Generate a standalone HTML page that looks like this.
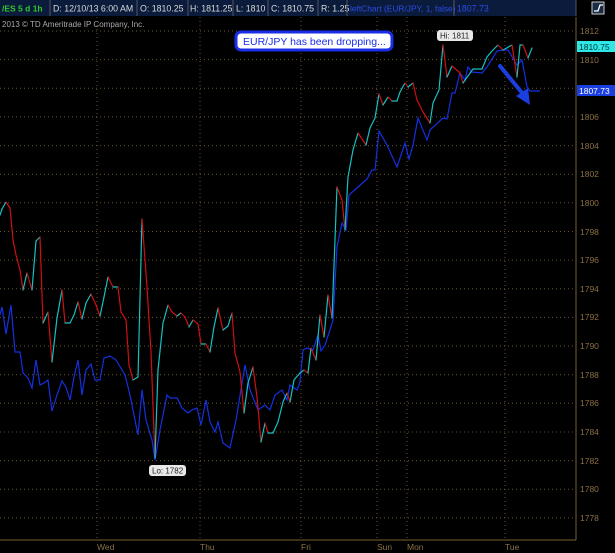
<!DOCTYPE html>
<html><head><meta charset="utf-8"><style>
html,body{margin:0;padding:0;background:#000;width:615px;height:553px;overflow:hidden;font-family:"Liberation Sans",sans-serif}
</style></head><body>
<svg id="s" width="615" height="553" xmlns="http://www.w3.org/2000/svg" style="position:absolute;left:0;top:0;font-family:'Liberation Sans',sans-serif">
<rect width="615" height="553" fill="#000"/>
<rect x="0" y="0" width="576" height="16" fill="#0b1b3b"/>
<g font-size="8.8" fill="#d8d8d8">
<text x="2" y="11.5" fill="#2ec82e" font-weight="bold" font-size="8.5">/ES 5 d 1h</text>
<line x1="50" y1="0" x2="50" y2="16" stroke="#556"/>
<text x="53" y="11.5">D: 12/10/13 6:00 AM</text>
<line x1="137" y1="0" x2="137" y2="16" stroke="#556"/>
<text x="140" y="11.5">O: 1810.25</text>
<line x1="188" y1="0" x2="188" y2="16" stroke="#556"/>
<text x="190" y="11.5">H: 1811.25</text>
<line x1="233" y1="0" x2="233" y2="16" stroke="#556"/>
<text x="236" y="11.5">L: 1810</text>
<line x1="268" y1="0" x2="268" y2="16" stroke="#556"/>
<text x="271" y="11.5">C: 1810.75</text>
<line x1="318" y1="0" x2="318" y2="16" stroke="#556"/>
<text x="321" y="11.5">R: 1.25</text>
<line x1="347" y1="0" x2="347" y2="16" stroke="#556"/>
<text x="350" y="11.5" fill="#2b4ce8" font-size="8.4">leftChart (EUR/JPY, 1, false)</text>
<line x1="454" y1="0" x2="454" y2="16" stroke="#556"/>
<text x="457" y="11.5" fill="#2b4ce8">1807.73</text>
<line x1="576" y1="0" x2="576" y2="16" stroke="#556"/>
</g>
<rect x="592" y="2" width="12" height="12" fill="#1a2a44" stroke="#ccc" stroke-width="1"/>
<path d="M594 11 L598 11 L600 5 L603 5" stroke="#fff" fill="none" stroke-width="1.3"/>
<text x="2" y="27" font-size="8" fill="#aaa">2013 © TD Ameritrade IP Company, Inc.</text>
<g stroke="#6a5530" stroke-dasharray="1,3" stroke-width="1">
<line x1="0" y1="31" x2="576" y2="31"/>
<line x1="0" y1="59.6" x2="576" y2="59.6"/>
<line x1="0" y1="88.3" x2="576" y2="88.3"/>
<line x1="0" y1="116.9" x2="576" y2="116.9"/>
<line x1="0" y1="145.6" x2="576" y2="145.6"/>
<line x1="0" y1="174.2" x2="576" y2="174.2"/>
<line x1="0" y1="202.8" x2="576" y2="202.8"/>
<line x1="0" y1="231.5" x2="576" y2="231.5"/>
<line x1="0" y1="260.1" x2="576" y2="260.1"/>
<line x1="0" y1="288.8" x2="576" y2="288.8"/>
<line x1="0" y1="317.4" x2="576" y2="317.4"/>
<line x1="0" y1="346" x2="576" y2="346"/>
<line x1="0" y1="374.7" x2="576" y2="374.7"/>
<line x1="0" y1="403.3" x2="576" y2="403.3"/>
<line x1="0" y1="432" x2="576" y2="432"/>
<line x1="0" y1="460.6" x2="576" y2="460.6"/>
<line x1="0" y1="489.2" x2="576" y2="489.2"/>
<line x1="0" y1="517.9" x2="576" y2="517.9"/>
<line x1="97" y1="17" x2="97" y2="540"/>
<line x1="200" y1="17" x2="200" y2="540"/>
<line x1="301" y1="17" x2="301" y2="540"/>
<line x1="377" y1="17" x2="377" y2="540"/>
<line x1="407" y1="17" x2="407" y2="540"/>
<line x1="505" y1="17" x2="505" y2="540"/>
</g>
<line x1="576" y1="17" x2="576" y2="540" stroke="#7a6030"/>
<line x1="0" y1="540" x2="576" y2="540" stroke="#7a6030"/>
<g font-size="8.5" fill="#8a7045">
<text x="580" y="34">1812</text><text x="580" y="63">1810</text><text x="580" y="120">1806</text>
<text x="580" y="149">1804</text><text x="580" y="177">1802</text><text x="580" y="206">1800</text>
<text x="580" y="235">1798</text><text x="580" y="263">1796</text><text x="580" y="292">1794</text>
<text x="580" y="320">1792</text><text x="580" y="349">1790</text><text x="580" y="378">1788</text>
<text x="580" y="406">1786</text><text x="580" y="435">1784</text><text x="580" y="464">1782</text>
<text x="580" y="492">1780</text><text x="580" y="521">1778</text>
<text x="97" y="550">Wed</text><text x="200" y="550">Thu</text><text x="301" y="550">Fri</text>
<text x="377" y="550">Sun</text><text x="407" y="550">Mon</text><text x="505" y="550">Tue</text>
</g>
<polyline fill="none" stroke="#1530e0" stroke-width="1.2" points="0,315 2,307 6,334 11,305 15,352 20,352 23,373 28,378 32,388 36,360 40,385 44,383 48,380 52,411 57,395 62,381 66,387 70,400 74,377 78,360 82,395 86,370 91,364 95,380 100,380 104,358 110,356 116,360 125,375 130,395 138,435 142,390 146,420 152,440 155,460 160,430 167,395 170,398 177,398 182,408 188,413 192,410 197,408 201,425 206,400 210,422 215,432 218,422 223,443 230,448 236,420 245,365 250,390 258,410 265,405 270,410 275,395 282,390 287,400 290,385 297,390 300,382 303,350 307,348 313,350 318,335 321,351 325,345 330,330 333,320 337,247 342,223 346,230 349,195 358,187 367,179 372,170 375,170 379,131 387,145 397,167 405,143 409,159 413,145 418,118 427,140 430,130 443,118 447,119 452,93 455,93 460,73 465,80 468,67 472,72 482,73 487,67 497,51 503,50 508,50 517,65 522,60 527,87 530,91 540,91"/>
<g id="p"></g>
<rect x="437" y="30" width="36" height="11" rx="3" fill="#e8e8e8"/>
<text x="440" y="38.5" font-size="8" fill="#222">Hi: 1811</text>
<rect x="149" y="465" width="37" height="11" rx="3" fill="#e8e8e8"/>
<text x="152" y="473.5" font-size="8" fill="#222">Lo: 1782</text>
<rect x="236" y="32" width="156" height="18" rx="5" fill="#fff" stroke="#1a2ee8" stroke-width="3"/>
<text x="243" y="45" font-size="10.5" fill="#1a2ee8">EUR/JPY has been dropping...</text>
<rect x="577" y="41" width="38" height="11" fill="#2ee8e8"/>
<text x="579" y="50" font-size="8.5" fill="#033">1810.75</text>
<rect x="577" y="85" width="38" height="11" fill="#1a3ee0"/>
<text x="579" y="94" font-size="8.5" fill="#fff">1807.73</text>
<line x1="500" y1="66" x2="523" y2="94" stroke="#1a3ee0" stroke-width="4" stroke-linecap="round"/>
<polygon points="516,96 530,105 528,88" fill="#1a3ee0"/>
</svg>
<script>
var P=[0,215,2,209,6,202,10,208,13,240,16,255,20,270,23,290,27,273,32,290,36,241,40,237,43,323,48,312,52,362,57,318,62,290,65,323,70,323,74,315,78,302,82,319,86,303,91,294,96,305,100,316,104,297,108,277,113,287,118,287,121,312,126,320,129,365,133,380,138,377,142,219,147,287,151,352,155,458,158,370,163,323,168,305,172,312,177,316,181,313,185,317,189,327,193,320,198,324,201,344,206,344,210,352,214,327,218,308,223,330,228,326,232,313,235,353,240,372,244,413,248,383,253,367,257,397,261,442,265,423,268,433,273,433,278,422,283,402,287,393,290,402,294,380,300,373,304,370,308,373,311,348,316,360,320,315,324,337,328,295,332,318,337,187,342,200,345,230,348,177,353,150,358,133,366,145,370,128,375,118,379,94,383,105,388,97,392,101,397,101,400,92,405,83,408,87,413,83,417,100,423,112,430,123,433,103,439,90,443,45,447,77,452,66,460,73,463,83,473,69,482,69,487,57,492,51,498,45,503,50,512,45,517,77,520,45,523,45,528,58,532,48];
var g=document.getElementById('p'),h='';
for(var i=0;i<P.length-2;i+=2){var c=P[i+3]>P[i+1]?'#d01010':'#17c0c0';h+='<line x1="'+P[i]+'" y1="'+P[i+1]+'" x2="'+P[i+2]+'" y2="'+P[i+3]+'" stroke="'+c+'" stroke-width="1.2" stroke-linecap="round"/>';}
g.innerHTML=h;
</script>
</body></html>
